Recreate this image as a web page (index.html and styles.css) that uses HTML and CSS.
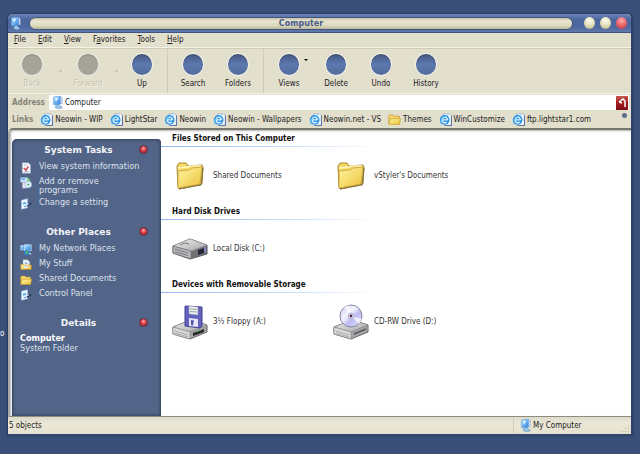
FILE: index.html
```
<!DOCTYPE html>
<html lang="en">
<head>
<meta charset="utf-8">
<title>Computer</title>
<link rel="stylesheet" href="styles.css">
</head>
<body>
<svg class="defs" aria-hidden="true">
  <defs>
    <linearGradient id="gold" x1="0" y1="0" x2="1" y2="1"><stop offset="0" stop-color="#fff5a0"/><stop offset="1" stop-color="#eec23c"/></linearGradient>
    <linearGradient id="sky" x1="0" y1="0" x2="1" y2="1"><stop offset="0" stop-color="#b4e6ff"/><stop offset="1" stop-color="#2b7ae0"/></linearGradient>
    <linearGradient id="metal" x1="0" y1="0" x2="1" y2="1"><stop offset="0" stop-color="#f4f4f4"/><stop offset="1" stop-color="#a2a2a6"/></linearGradient>
    <linearGradient id="disc" x1="0" y1="0" x2="1" y2="1"><stop offset="0" stop-color="#c8c6f0"/><stop offset=".4" stop-color="#f6f6ff"/><stop offset=".6" stop-color="#bcbcf4"/><stop offset="1" stop-color="#e2e4fa"/></linearGradient>
  </defs>
  <symbol id="pc" viewBox="0 0 16 16">
    <path d="M3 2Q3 1 4 1l7-1q1 0 1 1v8q0 1-1 1l-6 1q-2 0-2-1z" fill="url(#sky)" stroke="#6aa6e4" stroke-width=".7"/>
    <path d="M12 1l2 1v8l-2-1z" fill="#cfe0f8" stroke="#7f9cc6" stroke-width=".5"/>
    <path d="M7 11l3-1 1 2 3 2-4 2-5-2z" fill="#9cc8f0" stroke="#47749f" stroke-width=".6"/>
    <path d="M5 2.500l4-.5-3 5z" fill="#e8faff"/>
  </symbol>
  <symbol id="ie" viewBox="0 0 16 16">
    <path d="M6 1h7l2 2v12H6z" fill="#fff" stroke="#7f95c4" stroke-width=".8"/>
    <path d="M15.500 3v12.500H7" fill="none" stroke="#3f5ba0"/>
    <circle cx="7" cy="8.500" r="6" fill="#2b93e6"/>
    <path d="M10.500 8.500H4M10.500 8.500A3.400 3.400 0 1 0 9.500 11" fill="none" stroke="#dcf4ff" stroke-width="1.700"/>
    <path d="M2 14C0 11 7 3 12 2.500" fill="none" stroke="#6cc8f8" stroke-width="1"/>
  </symbol>
  <symbol id="folder" viewBox="0 0 16 16">
    <path d="M1 13V4l1-1.500h4L8 4h6v9z" fill="#f7d768" stroke="#b98d22" stroke-width=".8"/>
    <path d="M1 14L3 7h12.500L14 14z" fill="url(#gold)" stroke="#c79a2a" stroke-width=".8"/>
  </symbol>
  <symbol id="stuff" viewBox="0 0 16 16">
    <path d="M4 1h6l3 3v8H4z" fill="#fff" stroke="#8b9cb8" stroke-width=".8"/>
    <path d="M6 4h4M6 6h5" stroke="#75a3d8"/>
    <path d="M1 7h3l1 1h10v6H1z" fill="url(#gold)" stroke="#b98d22" stroke-width=".8"/>
    <path d="M5 9h6v3H5z" fill="#dfe9f3"/>
  </symbol>
  <symbol id="sysinfo" viewBox="0 0 16 16">
    <path d="M3 1h8l3 3v11H3z" fill="#fafcff" stroke="#9ba9c8" stroke-width=".8"/>
    <path d="M5 4h4M5 13h7" stroke="#8da2c4"/>
    <path d="M5 8l3 3 3-5" fill="none" stroke="#d2464e" stroke-width="2"/>
  </symbol>
  <symbol id="programs" viewBox="0 0 16 16">
    <path d="M1 1h9v6H1z" fill="#d9ebff" stroke="#a9c5ed" stroke-width=".8"/>
    <path d="M2 3h5" stroke="#338be0" stroke-width="1.500"/>
    <path d="M3 7h6v8H3z" fill="#e9e9f3" stroke="#8790a8" stroke-width=".7"/>
    <circle cx="11" cy="10" r="4.500" fill="#e5f4ff" stroke="#9ab6e2"/>
    <circle cx="11" cy="10" r="1.500" fill="#5daf66"/>
    <path d="M9 1l4 3-2 2" fill="none" stroke="#8ada76" stroke-width="1.500"/>
  </symbol>
  <symbol id="setting" viewBox="0 0 16 16">
    <path d="M2 3l8-2v12l-8 2z" fill="#f3faff" stroke="#9bcaf0" stroke-width=".8"/>
    <path d="M4 6l4-1v3L4 9z" fill="#56b2f3"/>
    <path d="M5 11l2 1 1-2" fill="none" stroke="#3276b6"/>
    <path d="M9 11l6-4" stroke="#1c2f52" stroke-width="2"/>
    <path d="M8 10l4-2" stroke="#cfe4ff"/>
  </symbol>
  <symbol id="network" viewBox="0 0 16 16">
    <path d="M1 2h7v6H1z" fill="url(#sky)" stroke="#b8ddf7" stroke-width=".8"/>
    <path d="M6 1h9v8H6z" fill="url(#sky)" stroke="#d1edff" stroke-width=".8"/>
    <circle cx="9" cy="11.500" r="3.600" fill="#2d7fdc"/>
    <path d="M7 10l3-1 1 3-2 2z" fill="#58c34c"/>
    <path d="M12 13h3" stroke="#d3e6ef" stroke-width="1.500"/>
  </symbol>
  <symbol id="bigfolder" viewBox="0 0 28 28">
    <path d="M2 25L1 4l2-3h7l2 3 14-1 1 2-1 17L3 27z" fill="#f4d865" stroke="#a7852d"/>
    <path d="M2 6l10-1 2-1 11 0" fill="none" stroke="#fff8c2" stroke-width="1.500"/>
    <path d="M2 9l11-1 3-2 10-1-2 17-22 4z" fill="url(#gold)" stroke="#c6a136" stroke-width=".8"/>
    <path d="M3 27l22-4 2-17" fill="none" stroke="#80713f" stroke-width="1"/>
  </symbol>
  <symbol id="base" viewBox="0 0 36 36">
    <path d="M1 23l18-7 16 5v7L18 35 1 30z" fill="#a5a5a8" stroke="#67676a"/>
    <path d="M1 23l18-7 16 5-17 7z" fill="url(#metal)" stroke="#88888b" stroke-width=".7"/>
    <path d="M1 23l17 5v7L1 30z" fill="#d9d9da" stroke="#88888b" stroke-width=".6"/>
    <path d="M3 27l13 4M3 29l13 4" stroke="#98989b" stroke-width=".7"/>
  </symbol>
  <symbol id="hdd" viewBox="0 0 36 36">
    <path d="M1 15L18 8l17 6v9L18 28 1 22z" fill="#737377" stroke="#5b5b60"/>
    <path d="M1 15L18 8l17 6-16 6z" fill="url(#metal)" stroke="#9a9a9c" stroke-width=".6"/>
    <path d="M1 15l18 5v8L1 22z" fill="#b9b9bb" stroke="#6a6a6f" stroke-width=".7"/>
    <path d="M3 18l13 4M3 20.500l13 4" stroke="#7a7a7f"/>
    <path d="M26 19l6-2v5l-6 2z" fill="#27273a"/><path d="M33 16v5" stroke="#8c8ce4" stroke-width="1.500"/>
    <path d="M8 14l5-2 4 1" fill="none" stroke="#77777b"/>
  </symbol>
  <symbol id="floppy" viewBox="0 0 36 36">
    <use href="#base"/>
    <path d="M21 29l11-4v3l-11 4z" fill="#26262b"/>
    <path d="M13 2l17 1v19l-2 2-15-2z" fill="#6262bd" stroke="#41418e"/>
    <path d="M17 2l9 1v8l-9-1z" fill="#edf0ed" stroke="#9999c9" stroke-width=".6"/>
    <path d="M18 5l7 .5M18 7.500l7 .5" stroke="#9baaa0"/>
    <path d="M17 14l9 1v8l-9-1z" fill="#e6e6f8"/><path d="M19 16l3 .5-1 5-2-.5z" fill="#5454aa"/>
    <path d="M24 28l5-2" stroke="#52ae57"/>
  </symbol>
  <symbol id="cd" viewBox="0 0 36 36">
    <use href="#base"/>
    <circle cx="18" cy="12" r="11" fill="url(#disc)" stroke="#8585a2"/>
    <path d="M18 12L11 3l5-2zM18 12l8 8 3-5z" fill="#fff" opacity=".7"/>
    <circle cx="18" cy="12" r="3" fill="#e3dfef" stroke="#9999b3" stroke-width=".7"/>
    <circle cx="18" cy="12" r="1.400" fill="#51304b"/>
    <path d="M21 30l12-5" stroke="#58585c" stroke-width="1.500"/>
  </symbol>
</svg>

<span class="desktop-label">o</span>
<div class="window">
  <header class="titlebar">
    <svg class="icon"><use href="#pc"/></svg>
    <h1 class="title">Computer</h1>
    <div class="controls">
      <button class="ball" aria-label="Minimize"></button>
      <button class="ball" aria-label="Maximize"></button>
      <button class="ball close" aria-label="Close"></button>
    </div>
  </header>

  <nav class="menu">
    <button><u>F</u>ile</button>
    <button><u>E</u>dit</button>
    <button><u>V</u>iew</button>
    <button>F<u>a</u>vorites</button>
    <button><u>T</u>ools</button>
    <button><u>H</u>elp</button>
  </nav>

  <div class="toolbar">
    <button class="tool wide" disabled><span class="orb"></span>Back</button>
    <span class="dot"></span>
    <button class="tool wide" disabled><span class="orb"></span>Forward</button>
    <span class="dot"></span>
    <button class="tool"><span class="orb"></span>Up</button>
    <span class="rule"></span>
    <button class="tool"><span class="orb"></span>Search</button>
    <button class="tool"><span class="orb"></span>Folders</button>
    <span class="rule"></span>
    <button class="tool drop"><span class="orb"></span>Views</button>
    <button class="tool"><span class="orb"></span>Delete</button>
    <button class="tool"><span class="orb"></span>Undo</button>
    <button class="tool"><span class="orb"></span>History</button>
  </div>

  <form class="address">
    <label class="bar-label" for="addr">Address</label>
    <div class="field">
      <svg class="icon"><use href="#pc"/></svg>
      <input id="addr" type="text" value="Computer">
      <button class="go" type="button" aria-label="Go"><svg viewBox="0 0 12 14"><path d="M3 6l4-3 2 2v6M3 6l3 1" fill="none" stroke="#fff" stroke-width="1.500"/></svg></button>
    </div>
  </form>

  <nav class="links">
    <span class="bar-label">Links</span>
    <a href="#"><svg class="icon"><use href="#ie"/></svg>Neowin - WIP</a>
    <a href="#"><svg class="icon"><use href="#ie"/></svg>LightStar</a>
    <a href="#"><svg class="icon"><use href="#ie"/></svg>Neowin</a>
    <a href="#"><svg class="icon"><use href="#ie"/></svg>Neowin - Wallpapers</a>
    <a href="#"><svg class="icon"><use href="#ie"/></svg>Neowin.net - VS</a>
    <a href="#"><svg class="icon"><use href="#folder"/></svg>Themes</a>
    <a href="#"><svg class="icon"><use href="#ie"/></svg>WinCustomize</a>
    <a href="#"><svg class="icon"><use href="#ie"/></svg>ftp.lightstar1.com</a>
    <button class="more" aria-label="More links"></button>
  </nav>

  <div class="content">
    <aside class="side">
      <section>
        <h2>System Tasks<button class="fold" aria-label="Collapse System Tasks"></button></h2>
        <ul>
          <li><a href="#"><svg class="icon"><use href="#sysinfo"/></svg>View system information</a></li>
          <li><a href="#"><svg class="icon"><use href="#programs"/></svg>Add or remove<br>programs</a></li>
          <li><a href="#"><svg class="icon"><use href="#setting"/></svg>Change a setting</a></li>
        </ul>
      </section>
      <section>
        <h2>Other Places<button class="fold" aria-label="Collapse Other Places"></button></h2>
        <ul>
          <li><a href="#"><svg class="icon"><use href="#network"/></svg>My Network Places</a></li>
          <li><a href="#"><svg class="icon"><use href="#stuff"/></svg>My Stuff</a></li>
          <li><a href="#"><svg class="icon"><use href="#folder"/></svg>Shared Documents</a></li>
          <li><a href="#"><svg class="icon"><use href="#setting"/></svg>Control Panel</a></li>
        </ul>
      </section>
      <section>
        <h2>Details<button class="fold" aria-label="Collapse Details"></button></h2>
        <p><strong>Computer</strong><br>System Folder</p>
      </section>
    </aside>
    <main class="files">
      <section>
        <h2>Files Stored on This Computer</h2>
        <div class="row">
          <a href="#"><svg class="big"><use href="#bigfolder" x="4" y="4" width="28" height="28"/></svg>Shared Documents</a>
          <a href="#"><svg class="big"><use href="#bigfolder" x="4" y="4" width="28" height="28"/></svg>vStyler's Documents</a>
        </div>
      </section>
      <section>
        <h2>Hard Disk Drives</h2>
        <div class="row">
          <a href="#"><svg class="big"><use href="#hdd"/></svg>Local Disk (C:)</a>
        </div>
      </section>
      <section>
        <h2>Devices with Removable Storage</h2>
        <div class="row">
          <a href="#"><svg class="big"><use href="#floppy"/></svg>3½ Floppy (A:)</a>
          <a href="#"><svg class="big"><use href="#cd"/></svg>CD-RW Drive (D:)</a>
        </div>
      </section>
    </main>
  </div>

  <footer class="status">
    <span class="count">5 objects</span>
    <span class="zone"><svg class="icon"><use href="#pc"/></svg>My Computer</span>
  </footer>
</div>
</body>
</html>
```
FILE: styles.css
```
* { box-sizing: border-box; }

body {
  margin: 0;
  min-height: 100vh;
  padding: 13px 7px 18px;
  display: flex;
  background: #3a5079;
  color: #222;
  font: 8px/10px "DejaVu Sans Condensed", "DejaVu Sans", sans-serif;
}

button, input {
  margin: 0;
  padding: 0;
  border: 0;
  background: none;
  color: inherit;
  font: inherit;
}

a { color: inherit; text-decoration: none; }
h1, h2, p, ul { margin: 0; padding: 0; }
ul { list-style: none; }
.defs { position: absolute; width: 0; height: 0; }
.icon { width: 13px; height: 13px; flex: none; }

.desktop-label {
  position: absolute;
  left: 0;
  top: 329px;
  color: #fff;
}

.window {
  flex: 1;
  display: flex;
  flex-direction: column;
  border: 1px solid #2c3b5e;
  border-bottom: 2px solid #33476c;
  border-right: 2px solid #2f4169;
  border-radius: 6px 6px 0 0;
  background: #e3dfcd;
  box-shadow: 0 0 2px 1px #344870;
}

.titlebar {
  height: 19px;
  flex: none;
  display: flex;
  align-items: center;
  gap: 7px;
  padding: 0 4px 0 1px;
  border-radius: 5px 5px 0 0;
  border-bottom: 1px solid #3f5480;
  background: linear-gradient(#6b85bd, #4c669d 30%, #4d68a0 70%, #5f79ab);
}

.title {
  flex: 1;
  margin-right: 4px;
  border: 1px solid #42547d;
  border-radius: 7px;
  background: linear-gradient(#c7c3a8, #e9e5d1 30%, #dcd8bc 70%, #b9b79b);
  color: #465988;
  text-align: center;
  font: bold 8px/11px "DejaVu Sans", sans-serif;
}

.controls { display: flex; gap: 5px; }

.ball {
  width: 11px;
  height: 12px;
  border-radius: 50%;
  background: radial-gradient(circle at 50% 30%, #fffef0, #ddd8b0 60%, #a9a582);
}

.ball.close { background: radial-gradient(circle at 50% 30%, #ffa8a8, #e1575c 60%, #9d3345); }

.menu {
  display: flex;
  gap: 12px;
  height: 15px;
  flex: none;
  padding: 0 6px;
  border-bottom: 1px solid #f5f2e6;
}

.toolbar {
  display: flex;
  gap: 1px;
  height: 46px;
  flex: none;
  border-bottom: 1px solid #f5f2e6;
  border-top: 1px solid #d0ccba;
}

.tool {
  position: relative;
  width: 44px;
  padding-top: 4px;
  display: flex;
  flex-direction: column;
  align-items: center;
  gap: 3px;
}

.tool.wide { width: 48px; }

.orb {
  width: 22px;
  height: 23px;
  border: 1px solid #f0efe9;
  border-radius: 50%;
  background: linear-gradient(#465a85, #5c78ae 50%, #536b9c);
  box-shadow: inset 0 1px 1px #3b4862;
}

.tool:disabled { color: #c5c1ae; text-shadow: 1px 1px #f6f4ea; }
.tool:disabled .orb { background: #a5a49a; box-shadow: inset 0 1px 1px #85847b; border-color: #e9e6da; }

.dot { width: 6px; display: flex; justify-content: center; }
.dot::before { content: ""; width: 3px; height: 2px; margin-top: 21px; background: #ccc8b6; }

.rule { width: 1px; margin: 0 2px; background: #cfcbb9; }

.tool.drop { margin-right: 2px; }
.tool.drop::after {
  content: "";
  position: absolute;
  right: 3px;
  top: 10px;
  border: 2px solid transparent;
  border-top-color: #000;
}

.bar-label {
  color: #858376;
  font: bold 8px/11px "DejaVu Sans Condensed", "DejaVu Sans", sans-serif;
}

.address {
  display: flex;
  align-items: center;
  gap: 4px;
  height: 17px;
  flex: none;
  padding: 0 2px 0 4px;
}

.field {
  flex: 1;
  display: flex;
  align-items: center;
  gap: 1px;
  height: 15px;
  padding: 0 1px 0 2px;
  background: #fff;
}

.field input { flex: 1; min-width: 0; outline: 0; }

.go {
  width: 12px;
  height: 14px;
  background: linear-gradient(#c45a50, #a41a20 50%, #7e1018);
}

.go svg { display: block; }

.links {
  position: relative;
  display: flex;
  align-items: center;
  gap: 7px;
  height: 17px;
  flex: none;
  padding: 0 4px;
  white-space: nowrap;
}

.links a { display: flex; align-items: center; gap: 2px; }

.more {
  position: absolute;
  right: 4px;
  top: 2px;
  width: 5px;
  height: 5px;
  border-radius: 50%;
  background: #5a6b8c;
}

.content {
  flex: 1;
  display: flex;
  border-top: 2px solid #77766f;
  border-left: 2px solid #aaa9a6;
  border-bottom: 1px solid #8e8c80;
  border-radius: 5px 0 0 0;
  background: #fff;
  box-shadow: inset 1px 1px 2px #b5b5b5;
}

.side {
  width: 149px;
  flex: none;
  display: flex;
  flex-direction: column;
  gap: 14px;
  margin: 9px 0 0 2px;
  padding: 4px 8px 0;
  border-radius: 5px 4px 0 0;
  background: #526487;
  box-shadow: inset 0 0 3px 1px #35425f;
  color: #dde3ee;
  font: 9px/9px "DejaVu Sans Condensed", "DejaVu Sans", sans-serif;
}

.side h2 {
  position: relative;
  margin-bottom: 3px;
  padding-right: 16px;
  color: #f2f4f8;
  text-align: center;
  font: bold 9px/14px "DejaVu Sans", sans-serif;
}

.fold {
  position: absolute;
  right: 5px;
  top: 2px;
  width: 9px;
  height: 9px;
  border: 1px solid #5b3045;
  border-radius: 50%;
  background: radial-gradient(circle at 50% 35%, #ffaaa8, #d93840 45%, #8e2433);
}

.side li a {
  display: flex;
  gap: 7px;
  padding: 2px 0 1px;
  white-space: nowrap;
}

.side .icon { width: 12px; height: 12px; }
.side p { line-height: 10px; }
.side strong { color: #fff; }

.files {
  flex: 1;
  padding-top: 3px;
}

.files section { margin-bottom: 5px; }

.files h2 {
  padding: 0 11px 1px;
  border-bottom: 1px solid;
  border-image: linear-gradient(to right, #8fb6f4, #c4dcfb 120px, transparent 220px) 1;
  border-width: 0 0 1px;
  color: #111;
  font: bold 8px/12px "DejaVu Sans Condensed", "DejaVu Sans", sans-serif;
}

.row {
  display: grid;
  grid-template-columns: repeat(auto-fill, 161px);
  padding: 11px 0 0 11px;
  height: 54px;
}

.row a {
  display: flex;
  align-items: center;
  gap: 5px;
  height: 36px;
  color: #333;
}

.big { width: 36px; height: 36px; flex: none; }

.status {
  display: flex;
  align-items: center;
  height: 17px;
  flex: none;
  background: linear-gradient(#dedac8, #ece8d8 40%, #e4e0cf);
}

.count { flex: 1; padding-left: 1px; }

.zone {
  position: relative;
  display: flex;
  align-items: center;
  gap: 1px;
  width: 118px;
  height: 14px;
  padding-left: 5px;
  border-left: 1px solid #d0ccba;
}

.zone::after {
  content: "";
  position: absolute;
  right: 1px;
  bottom: 0;
  width: 9px;
  height: 9px;
  background: radial-gradient(circle, #b1ad9c 1px, transparent 1px) 0 0 / 3px 3px;
  clip-path: polygon(100% 0, 100% 100%, 0 100%);
}
```
